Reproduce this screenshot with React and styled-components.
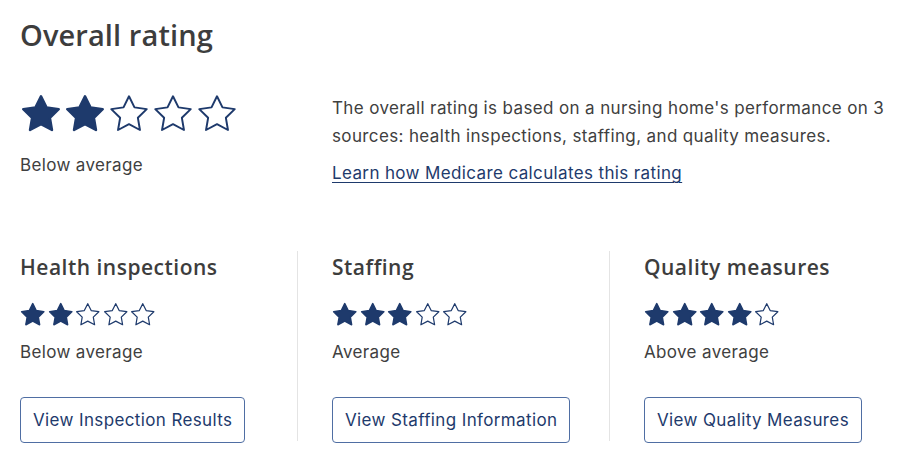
import React from "react";
import styled, { createGlobalStyle } from "styled-components";

const Global = createGlobalStyle`
  html, body { margin: 0; padding: 0; background: #ffffff; }
  body { font-family: Inter, Roboto, sans-serif; color: #404040; }
`;

const NAVY = "#1e3a6c";

const Page = styled.div`
  width: 900px;
  height: 464px;
  box-sizing: border-box;
  padding: 18px 8px 0 20px;
  overflow: hidden;
`;

const Title = styled.h1`
  margin: 0;
  font-family: "Open Sans", sans-serif;
  font-weight: 600;
  font-size: 29px;
  letter-spacing: 0.1px;
  line-height: 34px;
  color: #3d3d3d;
`;

const Top = styled.section`
  display: grid;
  grid-template-columns: 312px 1fr;
  margin-top: 40px;
`;

const StarRow = styled.div`
  display: flex;
  margin-left: -1px;
`;

const Label = styled.div`
  font-size: 17px;
  letter-spacing: 0.35px;
  line-height: 24px;
  color: #404040;
  margin-top: ${(p) => p.$mt}px;
`;

const Para = styled.p`
  margin: 0;
  padding-top: 2px;
  font-size: 17px;
  letter-spacing: 0.37px;
  line-height: 28px;
  color: #404040;
`;

const Link = styled.a`
  display: inline-block;
  margin-top: 9px;
  font-size: 17px;
  letter-spacing: 0.37px;
  line-height: 28px;
  color: ${NAVY};
  text-decoration: underline;
  text-underline-offset: 3px;
  text-decoration-thickness: 1px;
`;

const Cards = styled.section`
  display: grid;
  grid-template-columns: 277px 312px 1fr;
  margin-top: 64px;
`;

const Card = styled.div`
  height: 190px;
  box-sizing: border-box;
  padding-top: 2px;
  ${(p) => (p.$first ? "" : "border-left: 1px solid #e4e4e4; padding-left: 34px;")}
`;

const CardTitle = styled.h2`
  margin: 0;
  font-family: "Open Sans", sans-serif;
  font-weight: 600;
  font-size: 21px;
  letter-spacing: 0.5px;
  line-height: 28px;
  color: #3d3d3d;
`;

const SmallStars = styled(StarRow)`
  margin-top: 20px;
`;

const Button = styled.button`
  margin-top: 33px;
  height: 46px;
  padding: 0 12px;
  background: #fff;
  border: 1px solid #4f6ea3;
  border-radius: 4px;
  font-family: Inter, Roboto, sans-serif;
  font-size: 17px;
  letter-spacing: 0.37px;
  color: ${NAVY};
  cursor: pointer;
`;

const STAR = "12,2 15.09,8.26 22,9.27 17,14.14 18.18,21.02 12,17.77 5.82,21.02 7,14.14 2,9.27 8.91,8.26";

function Star({ filled, size }) {
  return (
    <svg width={size} height={size} viewBox="-0.4 -0.4 24.8 24.8" aria-hidden="true">
      <polygon
        points={STAR}
        fill={filled ? NAVY : "none"}
        stroke={NAVY}
        strokeWidth={filled ? 1.4 : 1.1}
        strokeLinejoin="round"
      />
    </svg>
  );
}

function Stars({ n, size, as: Comp = StarRow }) {
  return (
    <Comp>
      {[0, 1, 2, 3, 4].map((i) => (
        <Star key={i} filled={i < n} size={size} />
      ))}
    </Comp>
  );
}

const cards = [
  { title: "Health inspections", n: 2, label: "Below average", btn: "View Inspection Results" },
  { title: "Staffing", n: 3, label: "Average", btn: "View Staffing Information" },
  { title: "Quality measures", n: 4, label: "Above average", btn: "View Quality Measures" },
];

export default function App() {
  return (
    <>
      <Global />
      <Page>
        <Title>Overall rating</Title>
        <Top>
          <div>
            <Stars n={2} size={44} />
            <Label $mt={17}>Below average</Label>
          </div>
          <div>
            <Para>
              The overall rating is based on a nursing home's performance on 3 sources: health
              inspections, staffing, and quality measures.
            </Para>
            <Link href="#">Learn how Medicare calculates this rating</Link>
          </div>
        </Top>
        <Cards>
          {cards.map((c, i) => (
            <Card key={c.title} $first={i === 0}>
              <CardTitle>{c.title}</CardTitle>
              <Stars n={c.n} size={27.5} as={SmallStars} />
              <Label $mt={11}>{c.label}</Label>
              <Button>{c.btn}</Button>
            </Card>
          ))}
        </Cards>
      </Page>
    </>
  );
}
